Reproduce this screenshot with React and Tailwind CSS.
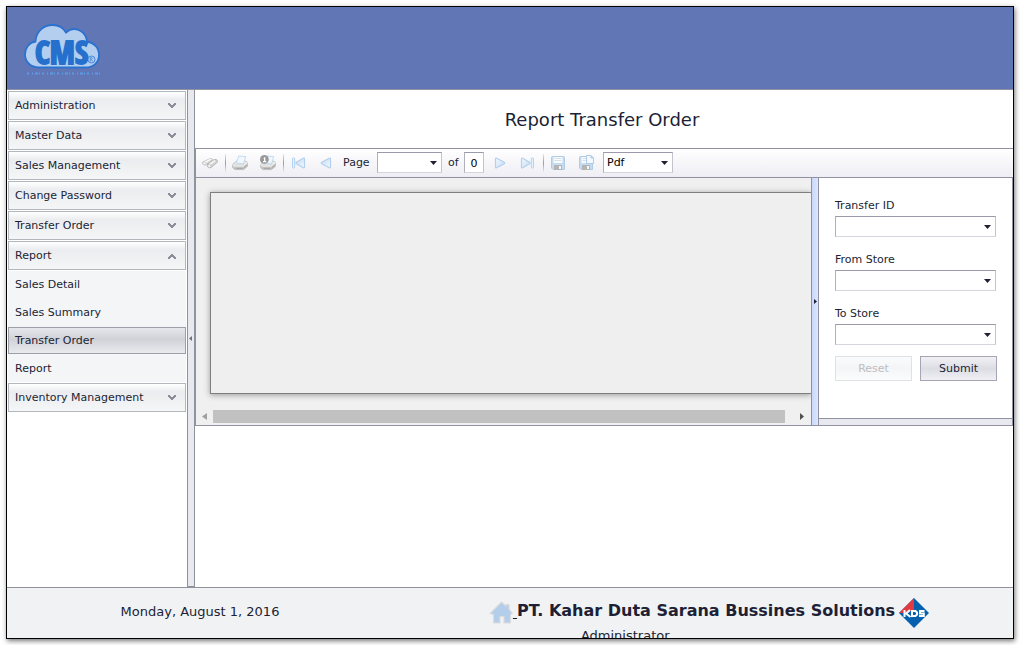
import React from "react";

const closedGroups = [
  "Administration",
  "Master Data",
  "Sales Management",
  "Change Password",
  "Transfer Order",
];

const reportLinks = ["Sales Detail", "Sales Summary", "Transfer Order", "Report"];

function Chevron({ up }) {
  return (
    <svg width="8" height="6" viewBox="0 0 8 6" aria-hidden="true" className={up ? "rotate-180" : ""}>
      <path d="M0 0H2V1H3V2H5V1H6V0H8V2H7V3H6V4H5V5H3V4H2V3H1V2H0Z" fill="#8b8e99" />
    </svg>
  );
}

function GroupHeader({ label, open = false }) {
  return (
    <button
      type="button"
      aria-expanded={open}
      className="flex h-[29px] w-full items-center justify-between border border-[#b2b7bd] bg-linear-to-b from-white via-[#ebecef] via-30% to-[#f4f6f7] pr-[9px] pl-1.5 text-left"
    >
      <span className="pt-0.5">{label}</span>
      <Chevron up={open} />
    </button>
  );
}

function Sidebar() {
  return (
    <nav className="flex w-[180px] shrink-0 flex-col gap-px p-px">
      {closedGroups.map((g) => (
        <GroupHeader key={g} label={g} />
      ))}
      <GroupHeader label="Report" open />
      <div className="flex flex-col gap-px bg-[#f3f5f7]">
        {reportLinks.map((l) => (
          <a
            key={l}
            href="#"
            className={
              l === "Transfer Order"
                ? "flex h-[27px] items-center border border-[#9c9fa8] bg-linear-to-b from-[#e6e7eb] via-[#d0d2d8] via-45% to-[#e9eaed] pt-0.5 pl-1.5"
                : "flex h-[27px] items-center border border-transparent pt-0.5 pl-1.5"
            }
          >
            {l}
          </a>
        ))}
      </div>
      <GroupHeader label="Inventory Management" />
    </nav>
  );
}

function Combo({ id, options, className }) {
  return (
    <div className={"relative " + className}>
      <select
        id={id}
        aria-label={id}
        className="block h-[21px] w-full appearance-none rounded-none border border-t-[#9b9aab] border-r-[#c3c3cc] border-b-[#d5d5dd] border-l-[#b0b0bb] bg-white pt-px pl-[3px] text-black"
      >
        {options.map((o) => (
          <option key={o}>{o}</option>
        ))}
      </select>
      <svg
        width="7"
        height="4"
        viewBox="0 0 7 4"
        aria-hidden="true"
        className="pointer-events-none absolute top-[9px] right-[5px]"
      >
        <path d="M0 0H7L3.5 4Z" fill="#201f35" />
      </svg>
    </div>
  );
}

function IconDefs() {
  return (
    <svg width="0" height="0" className="absolute" aria-hidden="true">
      <defs>
        <linearGradient id="ice" x1="0" y1="0" x2="1" y2="1">
          <stop offset="0" stopColor="#f4f9fe" />
          <stop offset="1" stopColor="#c3dbf2" />
        </linearGradient>
        <linearGradient id="metal" x1="0" y1="0" x2="0" y2="1">
          <stop offset="0" stopColor="#f4f4f4" />
          <stop offset="1" stopColor="#bcbcbc" />
        </linearGradient>
      </defs>
    </svg>
  );
}

function Binoculars() {
  return (
    <svg width="16" height="16" viewBox="0 0 16 16" strokeLinejoin="round">
      <path d="M.8 7L8.2 3.6Q10 3 10.8 4.6L4.2 9.6Q2.6 10.6 1.2 9.6Q.2 8.6.8 7Z" fill="#e0e0e0" stroke="#b9b9b9" strokeWidth=".8" />
      <path d="M5.6 9L12.2 4.6Q14.2 3.8 15.4 5.6Q15.8 6.8 14.8 7.8L9.6 12.2Q7.8 13.6 6 12.2Q4.6 10.6 5.6 9Z" fill="#d2d2d2" stroke="#adadad" strokeWidth=".8" />
      <path d="M2.6 7.4L9 4.2M7.6 9.4L13 5.6" stroke="#fafafa" strokeWidth="1.3" />
      <ellipse cx="2.5" cy="8.4" rx="1.5" ry="1.3" fill="#f6f6f6" stroke="#c4c4c4" strokeWidth=".6" />
      <ellipse cx="7.3" cy="11" rx="1.7" ry="1.5" fill="#f6f6f6" stroke="#bbb" strokeWidth=".6" />
    </svg>
  );
}

function Printer({ badge }) {
  return (
    <svg width="16" height="16" viewBox="0 0 16 16">
      <path d="M.6 9.6L4 6.2H14L15.7 7.6V11L11.6 14.6H2.6L.6 12.4Z" fill="url(#metal)" stroke="#b5b5b5" strokeWidth=".7" />
      <path d="M6.8 1L13.8 1.6L11.4 8.8L4.2 8Z" fill="#f0f7fe" stroke="#b6d4ee" strokeWidth=".8" />
      <path d="M.8 9.8L3.4 11H11.6L15.4 7.8" fill="none" stroke="#fafafa" strokeWidth=".8" />
      <path d="M11.8 14.2V11.4L15.4 8.4V11Z" fill="#b4b4b4" />
      <path d="M3.5 12.7H11L10.3 14H4.3Z" fill="#a8a8a8" />
      {badge && (
        <>
          <circle cx="4.4" cy="4.4" r="4.4" fill="#999" />
          <path d="M3.2 3.2L4.3 2.2H5.3V6.1H6.3V7.2H3V6.1H4V3.5Z" fill="#fff" />
        </>
      )}
    </svg>
  );
}

function Arrow({ bar, flip }) {
  return (
    <svg width="16" height="16" viewBox="0 0 16 16" className={flip ? "rotate-180" : ""}>
      <path
        d={bar ? "M1.5 4V12Q1.5 13.4 2.7 12.7L9.6 8.7Q10.5 8 9.6 7.3L2.7 3.3Q1.5 2.7 1.5 4Z" : "M3.5 4V12Q3.5 13.4 4.7 12.7L12.3 8.7Q13.2 8 12.3 7.3L4.7 3.3Q3.5 2.7 3.5 4Z"}
        fill="url(#ice)"
        stroke="#b3d0ee"
        strokeWidth="1.2"
      />
      {bar && <rect x="11.3" y="3" width="2.2" height="10" rx=".8" fill="#eaf4fd" stroke="#b3d0ee" />}
    </svg>
  );
}

function Floppy({ page }) {
  return (
    <svg width="16" height="16" viewBox="0 0 16 16">
      <path d="M1.5 2.5Q1.5 1.5 2.5 1.5H13.5Q14.5 1.5 14.5 2.5V14.5H3L1.5 13Z" fill="#c4dbf0" stroke="#afcce7" />
      <rect x="3.5" y="2" width="9" height="6" fill="#f8fbff" />
      <path d="M4.5 3.5H11.5M4.5 5.5H11.5" stroke="#d8dfe6" />
      <rect x="4" y="10" width="8" height="5" fill="#b5b5b5" />
      <rect x="9" y="11" width="2" height="3" fill="#f7f7f7" />
      {page && <path d="M8.5.5H13L15.5 3V8.5H8.5ZM13 .5V3H15.5" fill="#f2f8fe" stroke="#afcce7" />}
    </svg>
  );
}

function Tool({ label, children }) {
  return (
    <button type="button" disabled aria-label={label} className="flex h-4 w-4 shrink-0 items-center justify-center">
      {children}
    </button>
  );
}

function Separator() {
  return (
    <span className="mr-1.5 ml-[7px] h-[18px] w-px shrink-0 bg-linear-to-b from-[#e8e8ec] via-[#9b9b9b] to-[#e8e8ec]" />
  );
}

function Toolbar() {
  return (
    <div className="flex h-[30px] items-center border-y border-[#9191a1] bg-linear-to-b from-white to-[#eeeef4] pb-px pl-1.5">
      <Tool label="Search"><Binoculars /></Tool>
      <Separator />
      <div className="flex gap-3">
        <Tool label="Print report"><Printer /></Tool>
        <Tool label="Print page"><Printer badge /></Tool>
      </div>
      <Separator />
      <div className="flex gap-3">
        <Tool label="First page"><Arrow bar flip /></Tool>
        <Tool label="Previous page"><Arrow flip /></Tool>
      </div>
      <span className="ml-[9px] w-[34px] pt-0.5">Page</span>
      <Combo id="Page number" options={[""]} className="w-[65px]" />
      <span className="ml-1.5 w-4 pt-0.5">of</span>
      <input
        aria-label="Page count"
        readOnly
        value="0"
        className="h-[21px] w-5 border border-t-[#9b9aab] border-r-[#c3c3cc] border-b-[#d5d5dd] border-l-[#b0b0bb] bg-white pt-px text-center text-black"
      />
      <div className="ml-2 flex gap-3">
        <Tool label="Next page"><Arrow /></Tool>
        <Tool label="Last page"><Arrow bar /></Tool>
      </div>
      <Separator />
      <div className="mr-[9px] flex gap-3">
        <Tool label="Save to disk"><Floppy /></Tool>
        <Tool label="Save to window"><Floppy page /></Tool>
      </div>
      <Combo id="Format" options={["Pdf", "Xls", "Rtf"]} className="w-[70px]" />
    </div>
  );
}

function Viewer() {
  return (
    <div className="flex min-w-0 flex-1 flex-col bg-[#f0f0f0]">
      <div className="overflow-hidden pt-3.5 pb-4 pl-3.5">
        <div className="h-[202px] border border-r-0 border-[#7f7f7f] bg-[#efefef] shadow-[0_1px_6px_#999]" />
      </div>
      <div className="flex h-[13px] items-center pr-[7px] pl-1.5">
        <svg width="5" height="7" viewBox="0 0 5 7" aria-hidden="true"><path d="M5 0V7L0 3.5Z" fill="#a0a0a0" /></svg>
        <div className="mr-[15px] ml-1.5 h-[13px] flex-1 bg-[#c1c1c1]" />
        <svg width="4" height="7" viewBox="0 0 4 7" aria-hidden="true"><path d="M0 0V7L4 3.5Z" fill="#505050" /></svg>
      </div>
    </div>
  );
}

function Parameters() {
  return (
    <form className="flex w-[194px] shrink-0 flex-col border-r border-[#9191a1] bg-white">
      <div className="flex flex-1 flex-col pt-[21px] pl-4">
        <div className="flex flex-col gap-4">
          {["Transfer ID", "From Store", "To Store"].map((f) => (
            <div key={f} className="flex flex-col gap-[3px]">
              <label htmlFor={f} className="leading-[14px]">{f}</label>
              <Combo id={f} options={[""]} className="mr-4" />
            </div>
          ))}
        </div>
        <div className="mt-[11px] flex gap-2">
          <button type="reset" disabled className="h-[25px] w-[77px] border border-[#dfe1e5] bg-linear-to-b from-[#fafbfc] via-[#f4f5f7] to-[#fbfcfc] pt-0.5 text-[#bdbdc1]">
            Reset
          </button>
          <button type="submit" className="h-[25px] w-[77px] border border-[#a5a5b5] bg-linear-to-b from-[#f1f1f5] via-[#dcdde4] to-[#f0f0f4] pt-0.5">
            Submit
          </button>
        </div>
      </div>
      <div className="h-[7px] border-t border-[#9191a1] bg-[#e8e9ef]" />
    </form>
  );
}

function CmsLogo() {
  return (
    <svg width="80" height="56" viewBox="0 0 80 56" role="img" aria-label="CMS">
      <path
        d="M16 44.5C7 44.5 2 38 2 31.5C2 25 6 19.5 12.5 18.5C13 8 21 2 29.5 2C35.5 2 40.5 5 43 9.5C51 2 63 8 64 18.5C71 19.5 76 25 76 32C76 39 71 44.5 62.5 44.5Z"
        fill="#b3ceef"
        stroke="#2b72d0"
        strokeWidth="1.8"
      />
      <text
        x="12"
        y="40.5"
        className="font-['Open_Sans_Condensed','Liberation_Sans_Narrow',sans-serif] font-bold"
        fontSize="32"
        fill="#2670cd"
        stroke="#2670cd"
        strokeWidth="1.8"
      >
        CMS
      </text>
      <circle cx="68.5" cy="36.5" r="3.5" fill="#b3ceef" stroke="#2b72d0" strokeWidth=".8" />
      <path d="M67.3 38.5V34.8H68.8Q69.9 35.8 68.5 36.6L69.7 38.5" fill="none" stroke="#2b72d0" strokeWidth=".7" />
      <path d="M4 50.5H77" stroke="#5b9be6" strokeWidth="2" strokeDasharray="2 3 1 2 3 1 1 2" />
    </svg>
  );
}

function House() {
  return (
    <svg width="24" height="24" viewBox="0 0 24 24" role="img" aria-label="Home">
      <path d="M12.5 1L17 5V3.5H20V8L23.5 12.5L21.5 13.5V22H15V15.5H11V22H4.5V13.5L1 12.5Z" fill="#b3cdeb" stroke="#dcdcdc" strokeWidth="1.2" strokeLinejoin="round" />
    </svg>
  );
}

function KdsLogo() {
  return (
    <svg width="30" height="30" viewBox="0 0 30 30" role="img" aria-label="KDS">
      <path d="M15 0L30 15L15 30L0 15Z" fill="#0561ae" />
      <path d="M15 0V12L4 15L0 15Z" fill="#e33940" />
      <g fill="none" stroke="#fff" strokeWidth="2">
        <path d="M5.5 12V19M11 12L7 15.5L11.5 19" />
        <path d="M13 13H16.5L18 14.5V16.5L16.5 18H13Z" />
        <path d="M25.5 13H21V15.5H24.8V18H20" />
      </g>
    </svg>
  );
}

export default function App() {
  return (
    <div className="h-screen bg-white p-1.5 font-['DejaVu_Sans',Verdana,sans-serif] text-[11px] text-[#201f35]">
      <IconDefs />
      <div className="flex h-full flex-col overflow-hidden border border-black bg-white shadow-[1px_2px_5px_#777]">
        <header className="h-[83px] shrink-0 border-b border-[#9191a1] bg-[#6076b5] pt-4 pl-4">
          <CmsLogo />
        </header>

        <div className="flex min-h-0 flex-1">
          <Sidebar />
          <div className="flex w-2 shrink-0 items-center border border-t-0 border-[#8f929b] bg-[#e8e9ee]">
            <svg width="4" height="5" viewBox="0 0 4 5" aria-hidden="true"><path d="M4 0V5L1 2.5Z" fill="#707080" /></svg>
          </div>
          <main className="flex min-w-0 flex-1 flex-col">
            <h1 className="flex h-[58px] items-center justify-center pt-0.5 pr-1 text-lg">Report Transfer Order</h1>
            <section className="border-b border-l border-[#9191a1]">
              <Toolbar />
              <div className="flex h-[247px]">
                <Viewer />
                <div className="flex w-2 shrink-0 items-center justify-center border-x border-[#9191a1] bg-linear-to-r from-[#c9d8fb] to-[#dce6fe]">
                  <svg width="3" height="5" viewBox="0 0 3 5" aria-hidden="true"><path d="M0 0V5L3 2.5Z" fill="#201f35" /></svg>
                </div>
                <Parameters />
              </div>
            </section>
          </main>
        </div>

        <footer className="flex h-[51px] shrink-0 overflow-hidden border-t border-[#8f929b] bg-[#f1f2f4] text-[13px]">
          <div className="w-[386px] shrink-0 pt-3.5 text-center">Monday, August 1, 2016</div>
          <div className="flex flex-1 flex-col items-center pl-3">
            <div>
              <div className="flex items-center gap-1 pt-2.5">
                <a href="#" className="flex items-center underline"><House />&nbsp;</a>
                <strong className="-ml-1 pb-1 text-base leading-6 whitespace-nowrap">PT. Kahar Duta Sarana Bussines Solutions</strong>
                <KdsLogo />
              </div>
              <div className="pl-[92px] leading-4">Administrator</div>
            </div>
          </div>
        </footer>
      </div>
    </div>
  );
}
